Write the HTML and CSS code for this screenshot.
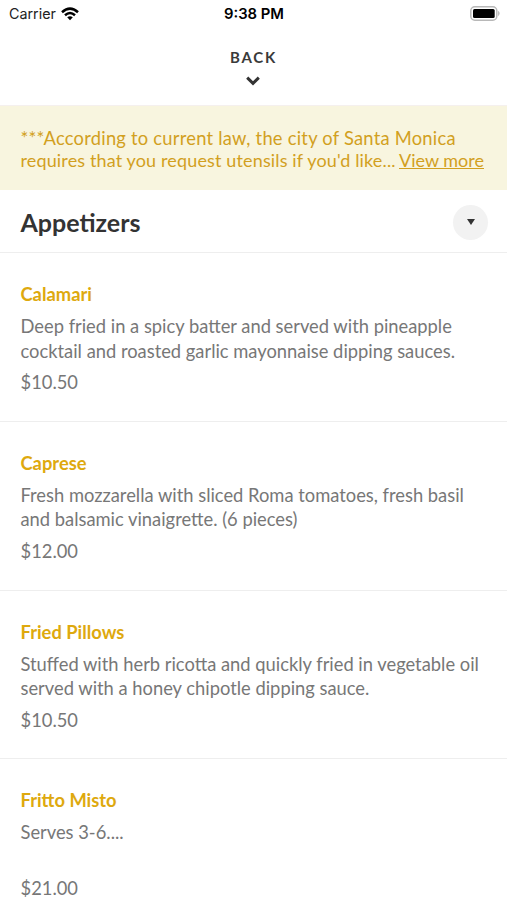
FILE: index.html
```html
<!DOCTYPE html>
<html lang="en">
<head>
<meta charset="utf-8">
<title>Menu</title>
<link rel="stylesheet" href="styles.css">
</head>
<body>
<div class="status">
  <div class="carrier"><span>Carrier</span>
    <svg class="wifi" width="18" height="14" viewBox="0 0 18 14" fill="none" stroke="#000" stroke-width="2.5"><path d="M1 5.2Q9-2 17 5.2M4 8.3Q9 3.8 14 8.3"/><path d="M6.2 10.3Q9 8 11.8 10.3L9 13.2Z" fill="#000" stroke="none"/></svg>
  </div>
  <div class="time">9:38 PM</div>
  <svg class="battery" width="31" height="15" viewBox="0 0 31 15"><rect x=".8" y=".8" width="26" height="13.4" rx="4" fill="none" stroke="#b8b8b8" stroke-width="1.5"/><rect x="3" y="3" width="21.7" height="9" rx="1.5"/><path d="M28.2 4.8Q31 7.5 28.2 10.2Z" fill="#b0b0b0"/></svg>
</div>
<header class="back"><span>BACK</span>
  <svg width="14" height="10" viewBox="0 0 14 10" fill="none" stroke="#333" stroke-width="3"><path d="M1.2 1.7L7 7.3L12.8 1.7"/></svg>
</header>
<section class="notice">
  <div class="first">***According to current law, the city of Santa Monica</div>
  <div class="row"><span>requires that you request utensils if you'd like...</span><a>View more</a></div>
</section>
<section class="category"><h1>Appetizers</h1>
  <div class="toggle"><svg width="8" height="6" viewBox="0 0 8 6"><path d="M0 0H8L4 6Z" fill="#333"/></svg></div>
</section>
<main>
  <article class="item"><h2>Calamari</h2><p>Deep fried in a spicy batter and served with pineapple<br>cocktail and roasted garlic mayonnaise dipping sauces.</p><div class="price">$10.50</div></article>
  <article class="item"><h2>Caprese</h2><p>Fresh mozzarella with sliced Roma tomatoes, fresh basil<br>and balsamic vinaigrette. (6 pieces)</p><div class="price">$12.00</div></article>
  <article class="item"><h2>Fried Pillows</h2><p>Stuffed with herb ricotta and quickly fried in vegetable oil<br>served with a honey chipotle dipping sauce.</p><div class="price">$10.50</div></article>
  <article class="item"><h2>Fritto Misto</h2><p>Serves 3-6....<br>&nbsp;</p><div class="price">$21.00</div></article>
</main>
</body>
</html>
```
FILE: styles.css
```css
* { box-sizing: border-box; }
html { height: 900px; overflow: hidden; }
body { margin: 0; height: 900px; overflow: hidden; background: #fff; font-family: Lato, sans-serif; color: #777; }
.status { height: 27px; display: grid; grid-template-columns: 1fr auto 1fr; align-items: center; padding: 0 6px 0 9px; color: #000; font-family: Inter, sans-serif; font-size: 14.3px; }
.carrier { display: flex; align-items: center; gap: 5.5px; color: #222; }
.time { font-weight: 600; font-size: 14.8px; margin: 0 2px 0 0; }
.battery { justify-self: end; }
.back { height: 79px; padding-top: 20px; display: flex; flex-direction: column; align-items: center; color: #3a3a3a; font-size: 15px; font-weight: 700; line-height: 20px; letter-spacing: 1.8px; border-bottom: 1px solid #f5f0ee; }
.back svg { margin-top: 9px; margin-right: 1px; }
.notice { height: 84px; background: #f8f5df; color: #d2a01e; padding: 21px 20px 0 20.5px; font-size: 18px; line-height: 22px; white-space: nowrap; }
.first { font-size: 18.33px; letter-spacing: .235px; }
.row { display: flex; justify-content: space-between; padding-right: 3px; letter-spacing: .14px; }
.row a { text-decoration: underline; text-decoration-skip-ink: none; letter-spacing: 0; }
.category { height: 62.4px; display: flex; align-items: center; justify-content: space-between; padding: 2px 19px 0 20.5px; }
h1 { margin: 0; color: #333; font-size: 25px; line-height: 30px; }
.toggle { width: 35px; height: 35px; border-radius: 50%; background: #f2f2f2; display: flex; align-items: center; justify-content: center; }
.item { height: 168.6px; border-top: 1px solid #eee; padding: 29px 20px 0 20.5px; font-size: 18.34px; line-height: 24.5px; white-space: nowrap; }
h2 { margin: 0; color: #dea90e; font-size: 18.34px; line-height: 24px; }
p { margin: 8px 0 7px; }
```
